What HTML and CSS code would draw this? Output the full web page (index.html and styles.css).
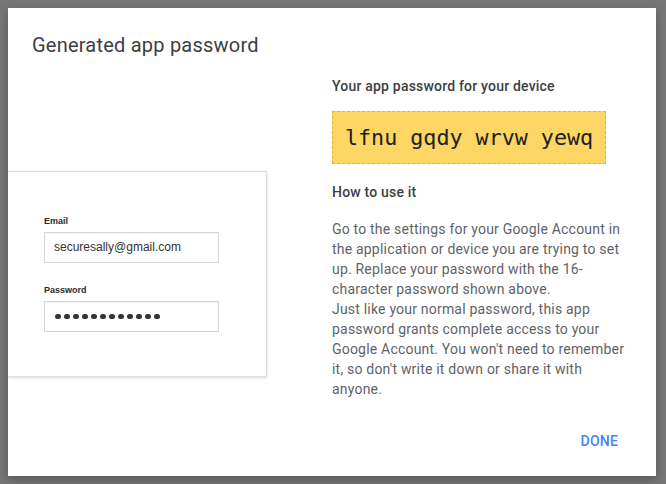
FILE: index.html
```html
<!DOCTYPE html>
<html lang="en">
<head>
<meta charset="utf-8">
<title>Generated app password</title>
<link rel="stylesheet" href="styles.css">
</head>
<body>
<div class="dialog">
  <h1 class="title">Generated app password</h1>
  <div class="body">
    <div class="illustration">
      <div class="card">
        <div class="field-label">Email</div>
        <div class="field">securesally@gmail.com</div>
        <div class="field-label second">Password</div>
        <div class="field dots">
          <span></span><span></span><span></span><span></span><span></span><span></span>
          <span></span><span></span><span></span><span></span><span></span><span></span>
        </div>
      </div>
    </div>
    <div class="info">
      <div class="heading">Your app password for your device</div>
      <div class="password">lfnu gqdy wrvw yewq</div>
      <div class="heading howto">How to use it</div>
      <p class="text">Go to the settings for your Google Account in the application or device you are trying to set up. Replace your password with the 16-character password shown above.<br>Just like your normal password, this app password grants complete access to your Google Account. You won't need to remember it, so don't write it down or share it with anyone.</p>
    </div>
  </div>
  <div class="footer">
    <button class="done">Done</button>
  </div>
</div>
</body>
</html>
```

FILE: styles.css
```css
html, body {
  margin: 0;
  padding: 0;
}
body {
  width: 666px;
  height: 484px;
  background: #767676;
  font-family: Roboto, "Noto Sans", Arial, sans-serif;
  overflow: hidden;
}
.dialog {
  position: absolute;
  left: 8px;
  top: 8px;
  width: 648px;
  height: 468px;
  background: #fff;
  box-shadow: 0 4px 10px rgba(0,0,0,0.25);
  overflow: hidden;
  display: flex;
  flex-direction: column;
  box-sizing: border-box;
  padding-top: 23px;
}
.title {
  margin: 0 0 0 24px;
  font-size: 20px;
  line-height: 28px;
  font-weight: 400;
  letter-spacing: 0.22px;
  color: #3c4043;
}
.body {
  display: flex;
  margin-top: 17px;
}
.illustration {
  width: 324px;
  flex: none;
}
.card {
  margin-top: 95px;
  width: 259px;
  height: 206px;
  border: 1px solid #e0e0e0;
  border-left: none;
  box-shadow: 0 1px 3px rgba(0,0,0,0.15);
  box-sizing: border-box;
  padding: 43px 0 0 36px;
  font-family: "Liberation Sans", Arial, sans-serif;
  color: #333;
}
.field-label {
  font-size: 9px;
  font-weight: 700;
  line-height: 12px;
  color: #2b2b2b;
}
.field-label.second {
  margin-top: 21px;
}
.field {
  margin-top: 5px;
  width: 175px;
  height: 31px;
  border: 1px solid #d6d6d6;
  box-shadow: inset 0 1px 1px rgba(0,0,0,0.04);
  box-sizing: border-box;
  padding-left: 9px;
  font-size: 12px;
  line-height: 29px;
  color: #333;
}
.dots {
  display: flex;
  align-items: center;
  gap: 3.2px;
  padding-left: 10px;
}
.dots span {
  width: 5.8px;
  height: 5.8px;
  border-radius: 50%;
  background: #333;
}
.info {
  width: 300px;
  flex: none;
  letter-spacing: 0.2px;
}
.heading {
  font-size: 14px;
  line-height: 20px;
  font-weight: 500;
  color: #3c4043;
}
.password {
  display: inline-block;
  margin-top: 15px;
  background: #fdd663;
  border: 1px dashed #e2b33c;
  padding: 0 12px;
  font-family: "DejaVu Sans Mono", "Liberation Mono", monospace;
  font-size: 21.7px;
  letter-spacing: 0;
  line-height: 51px;
  color: #202124;
  white-space: nowrap;
}
.howto {
  margin-top: 18px;
}
.text {
  margin: 17px 0 0;
  font-size: 14px;
  line-height: 20px;
  color: #5f6368;
}
.footer {
  margin-top: auto;
  display: flex;
  justify-content: flex-end;
  padding: 0 30px 17px 0;
}
.done {
  height: 36px;
  padding: 0 8px;
  border: none;
  background: none;
  font-family: Roboto, Arial, sans-serif;
  font-size: 14px;
  font-weight: 500;
  text-transform: uppercase;
  color: #4285f4;
  letter-spacing: 0.2px;
}
```
